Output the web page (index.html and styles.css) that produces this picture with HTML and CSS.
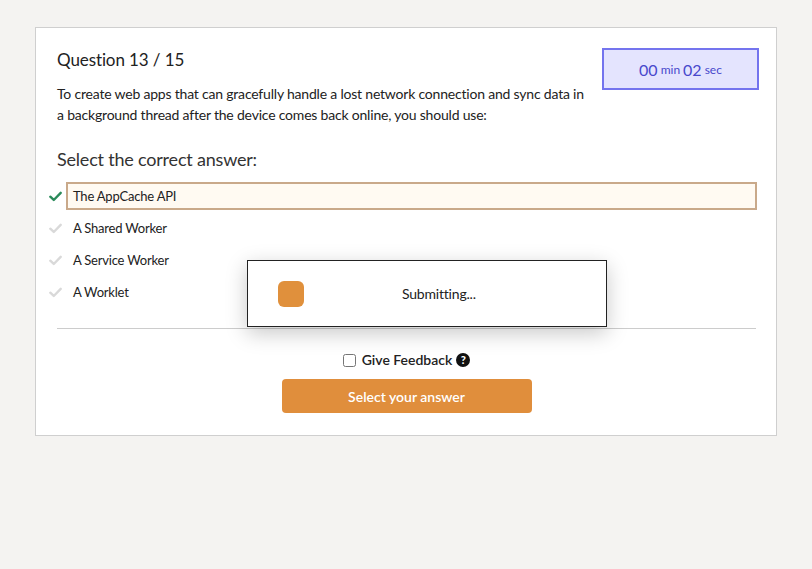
FILE: index.html
```html
<!DOCTYPE html>
<html lang="en">
<head>
    <meta charset="UTF-8">
    <title>Quiz</title>
    <link rel="stylesheet" href="styles.css">
</head>
<body>
    <div class="quiz-card">
        <div class="quiz-header">
            <div class="quiz-intro">
                <h1 class="quiz-title">Question 13 / 15</h1>
                <p class="quiz-question">To create web apps that can gracefully handle a lost network connection and sync data in a background thread after the device comes back online, you should use:</p>
            </div>
            <div class="timer">
                <span class="timer-num">00</span> <span class="timer-unit">min</span> <span class="timer-num">02</span> <span class="timer-unit">sec</span>
            </div>
        </div>

        <h2 class="quiz-prompt">Select the correct answer:</h2>

        <ul class="answers">
            <li class="answer answer-selected">
                <svg class="answer-check" viewBox="0 0 12 10"><polyline points="1.2,5.2 4.4,8.2 10.8,1.6" /></svg>
                <span class="answer-label">The AppCache API</span>
            </li>
            <li class="answer">
                <svg class="answer-check" viewBox="0 0 12 10"><polyline points="1.2,5.2 4.4,8.2 10.8,1.6" /></svg>
                <span class="answer-label">A Shared Worker</span>
            </li>
            <li class="answer">
                <svg class="answer-check" viewBox="0 0 12 10"><polyline points="1.2,5.2 4.4,8.2 10.8,1.6" /></svg>
                <span class="answer-label">A Service Worker</span>
            </li>
            <li class="answer">
                <svg class="answer-check" viewBox="0 0 12 10"><polyline points="1.2,5.2 4.4,8.2 10.8,1.6" /></svg>
                <span class="answer-label">A Worklet</span>
            </li>
        </ul>

        <hr class="divider">

        <div class="feedback">
            <label class="feedback-label"><input type="checkbox" class="feedback-box"> Give Feedback</label>
            <span class="help-icon">?</span>
        </div>

        <div class="actions">
            <button class="submit-btn" type="button">Select your answer</button>
        </div>
    </div>

    <!-- loading dialog over the card -->
    <div class="submitting">
        <span class="spinner"></span>
        <span class="submitting-text">Submitting...</span>
    </div>
</body>
</html>
```

FILE: styles.css
```css
html, body {
    margin: 0;
    padding: 0;
    font-family: Lato, 'Open Sans', sans-serif;
}

body {
    background: #f4f3f1;
    padding: 27px 35px;
    min-height: 569px;
    box-sizing: border-box;
    position: relative;
    color: #222;
}

.quiz-card {
    background: #ffffff;
    border: 1px solid #cfcfcf;
    padding: 20px 20px 22px 21px;
}

.quiz-header {
    display: flex;
    justify-content: space-between;
    align-items: flex-start;
    margin-right: -3px;
}

.quiz-intro {
    width: 533px;
}

.quiz-title {
    margin: 0;
    font-size: 17px;
    line-height: 24px;
    font-weight: 400;
    letter-spacing: -0.1px;
    color: #222;
}

.quiz-question {
    margin: 11px 0 0;
    font-size: 14px;
    line-height: 21px;
    letter-spacing: -0.2px;
}

.timer {
    width: 153px;
    height: 38px;
    background: #e4e4fe;
    border: 2px solid #7474ee;
    color: #4848cc;
    display: flex;
    align-items: center;
    justify-content: center;
    gap: 3px;
}

.timer-num {
    font-size: 16px;
}

.timer-unit {
    font-size: 12px;
}

.quiz-prompt {
    margin: 22px 0 0;
    font-size: 18px;
    line-height: 24px;
    font-weight: 400;
    letter-spacing: -0.2px;
    color: #333;
}

.answers {
    list-style-type: none;
    margin: 9px -1px 0 -8px;
    padding: 0;
}

.answer {
    display: flex;
    align-items: center;
    height: 32px;
    font-size: 13px;
    letter-spacing: -0.2px;
}

.answer-check {
    width: 13px;
    height: 11px;
    margin-right: 4px;
    fill: none;
    stroke: #d9d9d9;
    stroke-width: 2.2;
    stroke-linecap: round;
    stroke-linejoin: round;
}

.answer-label {
    flex-grow: 1;
    height: 24px;
    line-height: 24px;
    padding-left: 5px;
    border: 2px solid transparent;
}

.answer-selected .answer-check {
    stroke: #2a8a5a;
}

.answer-selected .answer-label {
    background: #fffaf2;
    border-color: #c9a98a;
}

.divider {
    margin: 20px 0 0;
    border: none;
    border-top: 1px solid #cccccc;
}

.feedback {
    margin-top: 21px;
    display: flex;
    justify-content: center;
    align-items: center;
    gap: 4px;
    font-size: 14px;
    line-height: 20px;
    font-weight: 600;
}

.feedback-label {
    display: flex;
    align-items: center;
}

.feedback-box {
    width: 13px;
    height: 13px;
    margin: 0 6px 0 0;
}

.help-icon {
    width: 14px;
    height: 14px;
    border-radius: 50%;
    background: #111;
    color: #fff;
    font-size: 11px;
    line-height: 14px;
    font-weight: 900;
    text-align: center;
}

.actions {
    margin-top: 9px;
    display: flex;
    justify-content: center;
}

.submit-btn {
    width: 250px;
    height: 34px;
    border: none;
    border-radius: 4px;
    background: #e08e3c;
    color: #ffffff;
    font-family: Lato, 'Open Sans', sans-serif;
    font-size: 14px;
    font-weight: 600;
    cursor: pointer;
}

.submitting {
    position: absolute;
    left: 247px;
    top: 260px;
    width: 328px;
    height: 65px;
    padding-left: 30px;
    background: #ffffff;
    border: 1px solid #222;
    box-shadow: 0 6px 20px rgba(0, 0, 0, 0.22);
    display: flex;
    align-items: center;
}

.spinner {
    width: 26px;
    height: 26px;
    border-radius: 6px;
    background: #e0903c;
}

.submitting-text {
    margin-left: 98px;
    font-size: 14px;
    letter-spacing: -0.2px;
}
```
